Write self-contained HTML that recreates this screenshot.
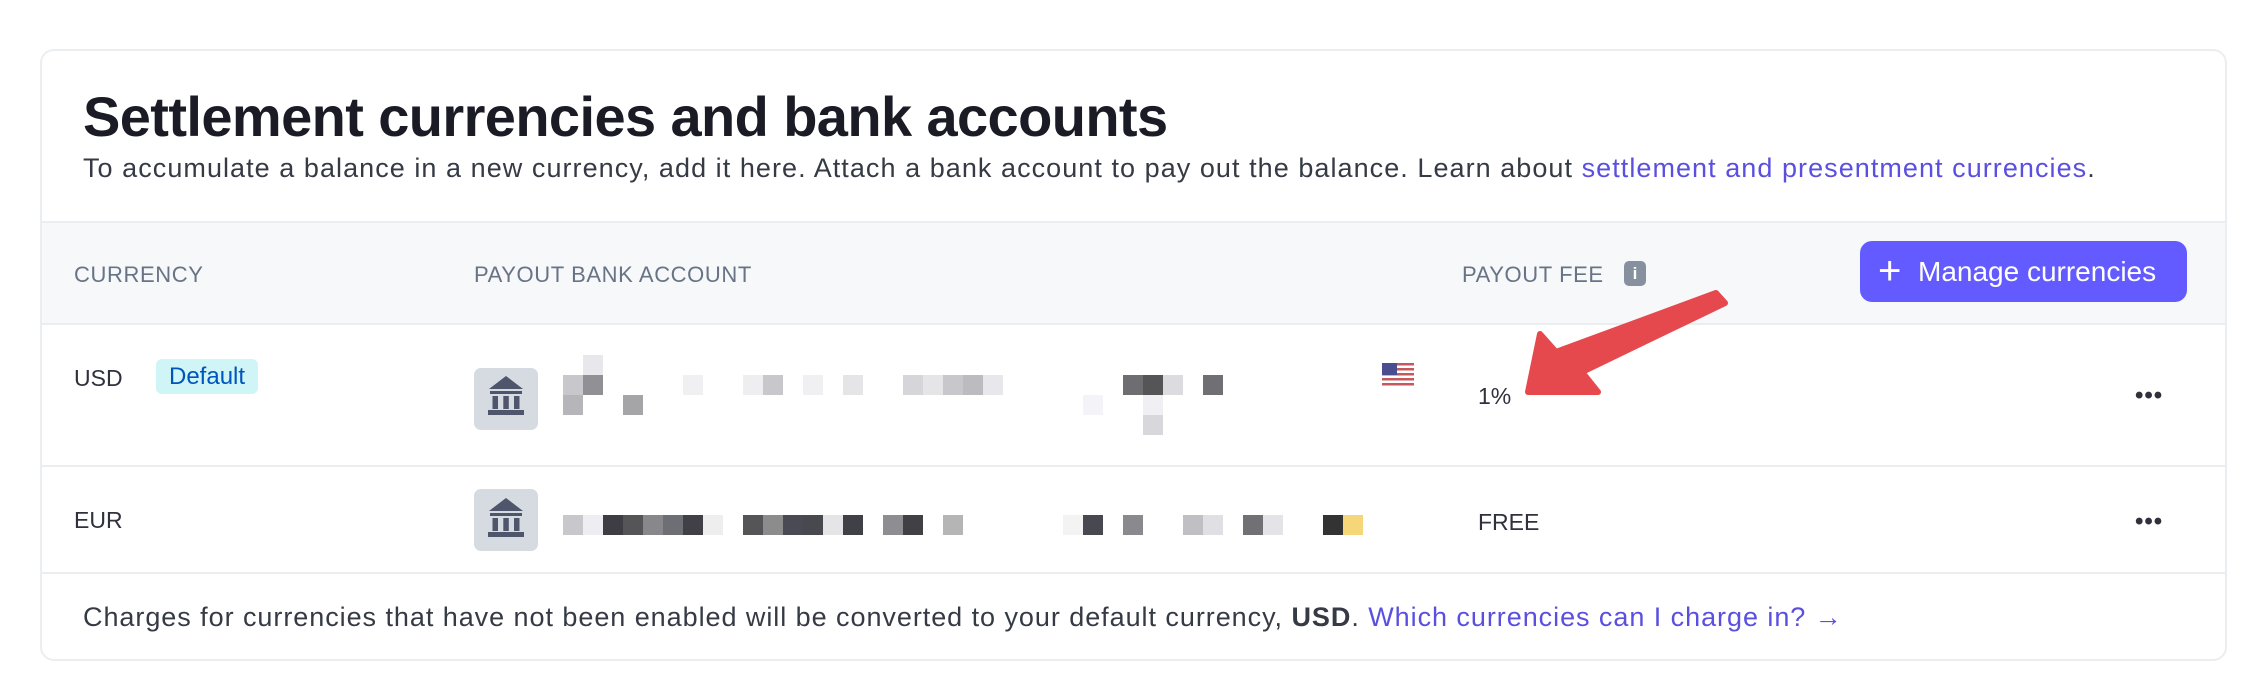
<!DOCTYPE html>
<html><head><meta charset="utf-8"><style>
*{margin:0;padding:0;box-sizing:border-box}
body{width:2268px;height:696px;background:#fff;font-family:"Liberation Sans",sans-serif;position:relative;overflow:hidden;color:#30313d}
.card{position:absolute;left:40px;top:49px;width:2187px;height:612px;border:2px solid #ebeef1;border-radius:14px;overflow:hidden}
.abs{position:absolute;white-space:nowrap}
.h1{left:41px;top:33px;font-size:56px;font-weight:700;color:#1a1b25;letter-spacing:-0.6px}
.sub{left:41px;top:102px;font-size:27px;color:#353a44;letter-spacing:1.05px}
a{color:#5b4fe0;text-decoration:none}
.hdr{position:absolute;left:0;top:170px;width:100%;height:104px;background:#f6f8fa;border-top:2px solid #ebeef1;border-bottom:2px solid #ebeef1}
.lab{font-size:22px;color:#687385;letter-spacing:0.6px}
.btn{left:1818px;top:190px;width:327px;height:61px;background:#635bff;border-radius:12px;color:#fff;font-size:28px;line-height:61px;padding-left:58px}
.row{position:absolute;left:0;width:100%;border-bottom:2px solid #ebeef1}
.cell{font-size:23px;color:#30313d}
.badge{background:#cff5f6;color:#0055bc;border-radius:6px;font-size:24px;padding:0 13px;height:35px;line-height:35px}
.bank{width:64px;height:62px;background:#d5dbe1;border-radius:7px}
.px{position:absolute;width:20px;height:20px}
.dots{font-size:24px;font-weight:700;color:#30313d;letter-spacing:1px}
</style></head><body>
<div class="card">
<div class="abs h1">Settlement currencies and bank accounts</div>
<div class="abs sub">To accumulate a balance in a new currency, add it here. Attach a bank account to pay out the balance. Learn about <a>settlement and presentment currencies</a>.</div>
<div class="hdr">
 <div class="abs lab" style="left:32px;top:39px">CURRENCY</div>
 <div class="abs lab" style="left:432px;top:39px">PAYOUT BANK ACCOUNT</div>
 <div class="abs lab" style="left:1420px;top:39px">PAYOUT FEE</div>
 <div class="abs" style="left:1582px;top:38px;width:22px;height:25px;background:#87909f;border-radius:5px;color:#fff;font-size:17px;font-weight:700;text-align:center;line-height:25px">i</div>
</div>
<div class="abs btn"><span style="position:absolute;left:18px;top:0;font-size:40px;font-weight:300">+</span>Manage currencies</div>
<div class="row" style="top:274px;height:142px">
 <div class="abs cell" style="left:32px;top:40px">USD</div>
 <div class="abs badge" style="left:114px;top:34px">Default</div>
 <div class="abs bank" style="left:432px;top:43px"></div>
</div>
<div class="row" style="top:416px;height:107px">
 <div class="abs cell" style="left:32px;top:40px">EUR</div>
 <div class="abs bank" style="left:432px;top:22px"></div>
 <div class="abs cell" style="left:1436px;top:42px">FREE</div>
</div>
<div class="abs" style="left:41px;top:551px;font-size:27px;color:#353a44;letter-spacing:0.95px">Charges for currencies that have not been enabled will be converted to your default currency, <b>USD</b>. <a>Which currencies can I charge in? →</a></div>
<div class="abs cell" style="left:1436px;top:332px">1%</div>
<div class="abs dots" style="left:2093px;top:331px">•••</div>
<div class="abs dots" style="left:2093px;top:457px">•••</div>
</div>
<svg class="abs" style="left:0;top:0" width="2268" height="696">
 <g fill="#4f566b">
  <g transform="translate(474,367)"><path d="M32 9 L49 22 L15 22 Z"/><rect x="16" y="24" width="32" height="3"/><rect x="18.5" y="29" width="5.5" height="13"/><rect x="29.3" y="29" width="5.5" height="13"/><rect x="40" y="29" width="5.5" height="13"/><rect x="14" y="43" width="36" height="5"/></g>
  <g transform="translate(474,489)"><path d="M32 9 L49 22 L15 22 Z"/><rect x="16" y="24" width="32" height="3"/><rect x="18.5" y="29" width="5.5" height="13"/><rect x="29.3" y="29" width="5.5" height="13"/><rect x="40" y="29" width="5.5" height="13"/><rect x="14" y="43" width="36" height="5"/></g>
 </g>
 <g transform="translate(1382,363)">
  <rect width="32" height="24" rx="3" fill="#fff"/>
  <g fill="#c4585d"><rect y="0" width="32" height="2.5"/><rect y="5" width="32" height="2.5"/><rect y="10" width="32" height="2.5"/><rect y="15" width="32" height="2.5"/><rect y="20" width="32" height="2.5"/></g>
  <rect width="15" height="12" fill="#4a4d8f"/>
 </g>
 <path d="M1716 293 L1725 303 L1582 372 L1598 392 L1528 392 L1540 334 L1556 352 Z" fill="#e5484d" stroke="#e5484d" stroke-width="6" stroke-linejoin="round"/>
</svg>
<div id="blk"></div>
<script>
var r1=[[0,375,'#c8c8cc'],[1,375,'#909095'],[6,375,'#f0f0f2'],[9,375,'#eeeef0'],[10,375,'#c8c8cc'],[12,375,'#f0f0f2'],[14,375,'#e5e5e8'],[17,375,'#d5d5da'],[18,375,'#e5e5e8'],[19,375,'#c8c8cc'],[20,375,'#bcbcc0'],[21,375,'#e8e8ec'],[28,375,'#6e6e72'],[29,375,'#555558'],[30,375,'#dcdce0'],[32,375,'#707074'],[1,355,'#e8e8ec'],[0,395,'#b5b5ba'],[3,395,'#a5a5a8'],[26,395,'#f4f4f8'],[29,395,'#f0f0f4'],[29,415,'#d8d8dc'],
[0,515,'#c8c8cc'],[1,515,'#eeeef2'],[2,515,'#3d3d43'],[3,515,'#555558'],[4,515,'#88888c'],[5,515,'#6e6e75'],[6,515,'#404046'],[7,515,'#eeeeee'],[9,515,'#555558'],[10,515,'#8c8c8c'],[11,515,'#4a4a55'],[12,515,'#48484f'],[13,515,'#e5e5e8'],[14,515,'#404047'],[16,515,'#8e8e92'],[17,515,'#404045'],[19,515,'#b5b5b5'],[25,515,'#f3f3f3'],[26,515,'#484850'],[28,515,'#8a8a8e'],[31,515,'#c0c0c4'],[32,515,'#e0e0e4'],[34,515,'#707075'],[35,515,'#e4e4e8'],[38,515,'#333333'],[39,515,'#f5d77a']];
var h='';r1.forEach(function(b){h+='<div class="px" style="left:'+(563+20*b[0])+'px;top:'+b[1]+'px;background:'+b[2]+'"></div>'});
document.getElementById('blk').innerHTML=h;
</script>
</body></html>
